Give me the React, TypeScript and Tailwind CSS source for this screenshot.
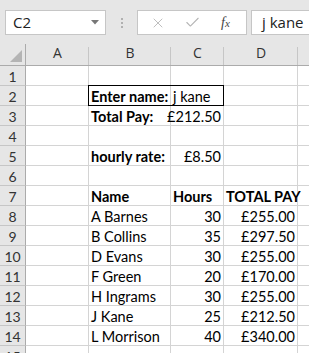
import { X, Check } from "lucide-react";

const cols = [26, 63, 82, 53, 74, 20];

type Cell = { t?: string; b?: boolean; r?: boolean };

// columns A, B, C, D
const rows: Cell[][] = [
  [],
  [{}, { t: "Enter name:", b: true }, { t: "j kane" }],
  [{}, { t: "Total Pay:", b: true }, { t: "£212.50", r: true }],
  [],
  [{}, { t: "hourly rate:", b: true }, { t: "£8.50", r: true }],
  [],
  [{}, { t: "Name", b: true }, { t: "Hours", b: true }, { t: "TOTAL PAY", b: true }],
  [{}, { t: "A Barnes" }, { t: "30", r: true }, { t: "£255.00", r: true }],
  [{}, { t: "B Collins" }, { t: "35", r: true }, { t: "£297.50", r: true }],
  [{}, { t: "D Evans" }, { t: "30", r: true }, { t: "£255.00", r: true }],
  [{}, { t: "F Green" }, { t: "20", r: true }, { t: "£170.00", r: true }],
  [{}, { t: "H Ingrams" }, { t: "30", r: true }, { t: "£255.00", r: true }],
  [{}, { t: "J Kane" }, { t: "25", r: true }, { t: "£212.50", r: true }],
  [{}, { t: "L Morrison" }, { t: "40", r: true }, { t: "£340.00", r: true }],
  [],
];

const font = { fontFamily: "Lato, 'Liberation Sans', sans-serif" };

function DataCell({ c, w }: { c?: Cell; w: number }) {
  return (
    <div
      className={`h-[20px] shrink-0 border-r border-b border-[#d4d4d4] flex items-end pb-[1px] px-[2px] text-[14.5px] leading-none text-black whitespace-nowrap ${
        c?.r ? "justify-end" : "justify-start"
      } ${c?.b ? "font-bold" : ""}`}
      style={{ width: w }}
    >
      {c?.t}
    </div>
  );
}

const App = () => {
  return (
    <div className="w-[309px] h-[353px] overflow-hidden bg-white select-none" style={font}>
      {/* formula bar */}
      <div className="h-[44px] bg-[#e6e6e6] flex items-start pt-[10px]">
        <div className="ml-[5px] w-[101px] h-[25px] bg-white border border-[#c6c6c6] flex items-center justify-between pl-[7px] pr-[6px]">
          <span className="text-[15px] text-[#222]" style={{ fontFamily: "'Open Sans', sans-serif" }}>C2</span>
          <svg width="8" height="5" viewBox="0 0 8 5">
            <path d="M0 0 L8 0 L4 4.5 Z" fill="#777" />
          </svg>
        </div>
        <div className="w-[31px] h-[25px] flex flex-col items-center justify-center gap-[2px]">
          <div className="w-[2px] h-[2px] bg-[#b0b0b0]" />
          <div className="w-[2px] h-[2px] bg-[#b0b0b0]" />
          <div className="w-[2px] h-[2px] bg-[#b0b0b0]" />
        </div>
        <div className="w-[110px] h-[25px] bg-white border border-[#c6c6c6] flex items-center">
          <X size={16} strokeWidth={1.3} className="ml-[12px] text-[#b4b4b4]" />
          <Check size={17} strokeWidth={1.5} className="ml-[18px] text-[#b4b4b4]" />
          <span className="ml-[20px] text-[14px] italic text-[#444]" style={{ fontFamily: "'Liberation Serif', serif" }}>
            f<span className="text-[11px]">x</span>
          </span>
        </div>
        <div className="ml-[4px] flex-1 h-[25px] bg-white border border-[#c6c6c6] border-r-0 flex items-center pl-[10px]">
          <span className="text-[15px] text-[#222]" style={{ fontFamily: "'Open Sans', sans-serif" }}>j kane</span>
        </div>
      </div>

      {/* column headers */}
      <div className="flex h-[22px] bg-[#e6e6e6] border-b border-[#ababab]">
        <div className="shrink-0 border-r border-[#ababab] relative" style={{ width: cols[0] }}>
          <svg className="absolute left-[10px] top-[6px]" width="12" height="12" viewBox="0 0 12 12">
            <path d="M12 0 L12 12 L0 12 Z" fill="#b4b4b4" />
          </svg>
        </div>
        {["A", "B", "C", "D", ""].map((l, i) => (
          <div
            key={i}
            className="shrink-0 flex items-end justify-center pb-[2px] text-[14px] text-[#333] relative"
            style={{ width: cols[i + 1], fontFamily: "'Open Sans', sans-serif" }}
          >
            {l}
            <div className="absolute right-0 top-[3px] bottom-0 w-px bg-[#c6c6c6]" />
          </div>
        ))}
      </div>

      {/* rows */}
      {rows.map((r, ri) => (
        <div key={ri} className="flex">
          <div
            className="h-[20px] shrink-0 bg-[#e6e6e6] border-r border-b border-r-[#ababab] border-b-[#c6c6c6] flex items-end justify-center pb-[1px] text-[14px] leading-none text-[#333]"
            style={{ width: cols[0] }}
          >
            {ri + 1}
          </div>
          <DataCell c={r[0]} w={cols[1]} />
          {ri === 1 ? (
            <div className="flex shrink-0 relative">
              <DataCell c={r[1]} w={cols[2]} />
              <DataCell c={r[2]} w={cols[3]} />
              <div className="absolute -left-px -top-px right-0 bottom-0 border border-black pointer-events-none" />
            </div>
          ) : (
            <>
              <DataCell c={r[1]} w={cols[2]} />
              <DataCell c={r[2]} w={cols[3]} />
            </>
          )}
          <DataCell c={r[3]} w={cols[4]} />
          <DataCell w={cols[5]} />
        </div>
      ))}
    </div>
  );
};

export default App;
